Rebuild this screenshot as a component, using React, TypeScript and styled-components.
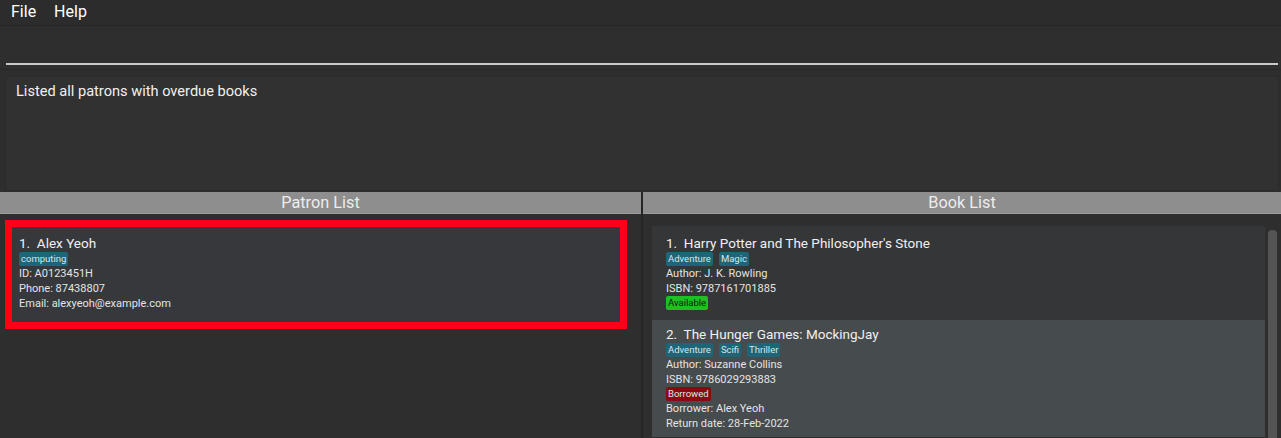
import React from 'react'
import styled, { createGlobalStyle } from 'styled-components'

const GlobalStyle = createGlobalStyle`
  html, body {
    margin: 0;
    padding: 0;
    background: #2e2e2e;
  }
  * {
    box-sizing: border-box;
  }
`

const WindowStyled = styled.div`
  width: 1281px;
  height: 438px;
  overflow: hidden;
  display: flex;
  flex-direction: column;
  background: #2e2e2e;
  font-family: Roboto, "Open Sans", sans-serif;
  color: #ffffff;
`

const MenuBarStyled = styled.div`
  height: 26px;
  display: flex;
  align-items: center;
  gap: 18px;
  padding: 0 0 2px 11px;
  background: #2c2c2c;
  border-bottom: 1px solid #242424;
  font-size: 16px;
`

const CommandBoxStyled = styled.div`
  height: 43px;
  padding: 0 3px 4px 6px;
  display: flex;
  align-items: flex-end;
`

const CommandInputStyled = styled.div`
  width: 100%;
  height: 36px;
  border-bottom: 2px solid #c9c9c9;
`

const ResultWrapStyled = styled.div`
  height: 123px;
  padding: 6px 2px 1px 5px;
  border-top: 1px solid #282828;
`

const ResultBoxStyled = styled.div`
  height: 100%;
  padding: 5px 10px;
  background: #313131;
  border: 1px solid #2a2a2a;
  font-size: 14.6px;
  color: #f0f0f0;
`

const PanesStyled = styled.div`
  flex: 1;
  display: grid;
  grid-template-columns: 641px 638px;
  column-gap: 2px;
  background: #262626;
  min-height: 0;
`

const PaneStyled = styled.div`
  display: flex;
  flex-direction: column;
  background: #2e2e2e;
  min-height: 0;
`

const PaneHeaderStyled = styled.div`
  height: 22px;
  background: #8e8e8e;
  border-bottom: 1px solid #9c9c9c;
  display: flex;
  align-items: center;
  justify-content: center;
  font-size: 16.3px;
  color: #ececec;
`

const PatronListStyled = styled.div`
  padding: 6px 0 0 5px;
`

const PatronCardStyled = styled.div`
  width: 622px;
  height: 109px;
  border: 7px solid #ff0016;
  background: #37383b;
  padding: 7px 7px;
`

const BookListStyled = styled.div`
  flex: 1;
  display: flex;
  gap: 3px;
  padding: 12px 4px 0 9px;
  min-height: 0;
`

const BookColumnStyled = styled.div`
  width: 613px;
  display: flex;
  flex-direction: column;
`

const BookCardStyled = styled.div<{ $selected?: boolean }>`
  background: ${props => (props.$selected ? '#464b4e' : '#353638')};
  padding: ${props => (props.$selected ? '5px 14px 6px' : '8px 14px 10px')};
`

const ScrollbarStyled = styled.div`
  width: 9px;
  margin-top: 4px;
  background: #545454;
  border-radius: 4px 4px 0 0;
`

const TitleStyled = styled.div`
  font-size: 13.5px;
  line-height: 18px;
  color: #f0f0f0;
  white-space: pre;
`

const TagRowStyled = styled.div`
  display: flex;
  gap: 6px;
`

const TagStyled = styled.span<{ $kind?: 'genre' | 'available' | 'borrowed' }>`
  height: 14px;
  line-height: 14px;
  padding: 0 2px;
  font-size: 9.5px;
  border-radius: 2px;
  background: ${props =>
    props.$kind === 'available' ? '#1fbe22' : props.$kind === 'borrowed' ? '#8b0a12' : '#1e6577'};
  color: ${props => (props.$kind === 'available' ? '#0a1a0a' : '#d6e6ea')};
`

const DetailStyled = styled.div`
  font-size: 11px;
  line-height: 15px;
  color: #e4e4e4;
`

const patron = {
  name: 'Alex Yeoh',
  tags: ['computing'],
  id: 'A0123451H',
  phone: '87438807',
  email: 'alexyeoh@example.com',
}

const books = [
  {
    title: "Harry Potter and The Philosopher's Stone",
    genres: ['Adventure', 'Magic'],
    author: 'J. K. Rowling',
    isbn: '9787161701885',
    borrower: null as string | null,
    returnDate: null as string | null,
  },
  {
    title: 'The Hunger Games: MockingJay',
    genres: ['Adventure', 'Scifi', 'Thriller'],
    author: 'Suzanne Collins',
    isbn: '9786029293883',
    borrower: 'Alex Yeoh',
    returnDate: '28-Feb-2022',
  },
]

function App() {
  return (
    <WindowStyled>
      <GlobalStyle />
      <MenuBarStyled>
        <span>File</span>
        <span>Help</span>
      </MenuBarStyled>
      <CommandBoxStyled>
        <CommandInputStyled />
      </CommandBoxStyled>
      <ResultWrapStyled>
        <ResultBoxStyled>Listed all patrons with overdue books</ResultBoxStyled>
      </ResultWrapStyled>
      <PanesStyled>
        <PaneStyled>
          <PaneHeaderStyled>Patron List</PaneHeaderStyled>
          <PatronListStyled>
            <PatronCardStyled>
              <TitleStyled>{`1.  ${patron.name}`}</TitleStyled>
              <TagRowStyled>
                {patron.tags.map(tag => (
                  <TagStyled key={tag}>{tag}</TagStyled>
                ))}
              </TagRowStyled>
              <DetailStyled>ID: {patron.id}</DetailStyled>
              <DetailStyled>Phone: {patron.phone}</DetailStyled>
              <DetailStyled>Email: {patron.email}</DetailStyled>
            </PatronCardStyled>
          </PatronListStyled>
        </PaneStyled>
        <PaneStyled>
          <PaneHeaderStyled>Book List</PaneHeaderStyled>
          <BookListStyled>
            <BookColumnStyled>
              {books.map((book, i) => (
                <BookCardStyled key={book.isbn} $selected={i === 1}>
                  <TitleStyled>{`${i + 1}.  ${book.title}`}</TitleStyled>
                  <TagRowStyled>
                    {book.genres.map(genre => (
                      <TagStyled key={genre}>{genre}</TagStyled>
                    ))}
                  </TagRowStyled>
                  <DetailStyled>Author: {book.author}</DetailStyled>
                  <DetailStyled>ISBN: {book.isbn}</DetailStyled>
                  <TagRowStyled>
                    <TagStyled $kind={book.borrower ? 'borrowed' : 'available'}>
                      {book.borrower ? 'Borrowed' : 'Available'}
                    </TagStyled>
                  </TagRowStyled>
                  {book.borrower && <DetailStyled>Borrower: {book.borrower}</DetailStyled>}
                  {book.returnDate && <DetailStyled>Return date: {book.returnDate}</DetailStyled>}
                </BookCardStyled>
              ))}
            </BookColumnStyled>
            <ScrollbarStyled />
          </BookListStyled>
        </PaneStyled>
      </PanesStyled>
    </WindowStyled>
  )
}

export default App
